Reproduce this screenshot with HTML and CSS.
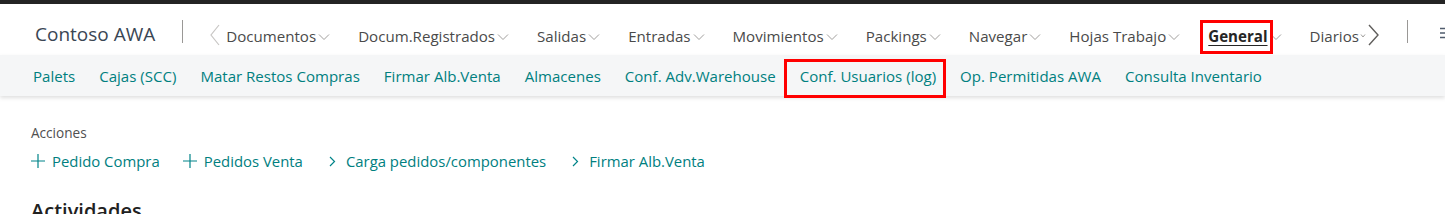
FILE: index.html
```html
<!DOCTYPE html>
<html lang="es">
<head>
<meta charset="utf-8">
<title>Contoso AWA</title>
<link rel="stylesheet" href="styles.css">
</head>
<body>
<div class="topbar"></div>
<header class="header">
  <div class="brand">Contoso AWA</div>
  <div class="vsep"></div>
  <svg class="scroll-left" width="10" height="22" viewBox="0 0 10 22"><path d="M9 1 L1 11 L9 21" fill="none" stroke="#c8c6c4" stroke-width="1.2"/></svg>
  <nav class="nav">
    <div class="nav-item">Documentos<svg class="caret" width="12" height="8" viewBox="0 0 12 8"><path d="M1 1.5 L6 6.5 L11 1.5" fill="none" stroke="#a19f9d" stroke-width="1"/></svg></div>
    <div class="nav-item">Docum.Registrados<svg class="caret" width="12" height="8" viewBox="0 0 12 8"><path d="M1 1.5 L6 6.5 L11 1.5" fill="none" stroke="#a19f9d" stroke-width="1"/></svg></div>
    <div class="nav-item">Salidas<svg class="caret" width="12" height="8" viewBox="0 0 12 8"><path d="M1 1.5 L6 6.5 L11 1.5" fill="none" stroke="#a19f9d" stroke-width="1"/></svg></div>
    <div class="nav-item">Entradas<svg class="caret" width="12" height="8" viewBox="0 0 12 8"><path d="M1 1.5 L6 6.5 L11 1.5" fill="none" stroke="#a19f9d" stroke-width="1"/></svg></div>
    <div class="nav-item">Movimientos<svg class="caret" width="12" height="8" viewBox="0 0 12 8"><path d="M1 1.5 L6 6.5 L11 1.5" fill="none" stroke="#a19f9d" stroke-width="1"/></svg></div>
    <div class="nav-item">Packings<svg class="caret" width="12" height="8" viewBox="0 0 12 8"><path d="M1 1.5 L6 6.5 L11 1.5" fill="none" stroke="#a19f9d" stroke-width="1"/></svg></div>
    <div class="nav-item">Navegar<svg class="caret" width="12" height="8" viewBox="0 0 12 8"><path d="M1 1.5 L6 6.5 L11 1.5" fill="none" stroke="#a19f9d" stroke-width="1"/></svg></div>
    <div class="nav-item">Hojas Trabajo<svg class="caret" width="12" height="8" viewBox="0 0 12 8"><path d="M1 1.5 L6 6.5 L11 1.5" fill="none" stroke="#a19f9d" stroke-width="1"/></svg></div>
    <div class="nav-item nav-active highlight"><span class="active-text">General</span><svg class="caret" width="12" height="8" viewBox="0 0 12 8"><path d="M1 1.5 L6 6.5 L11 1.5" fill="none" stroke="#a19f9d" stroke-width="1"/></svg></div>
    <div class="nav-item nav-last">Diarios<svg class="caret small" width="6" height="8" viewBox="0 0 6 8"><path d="M1 1.5 L3 4 L5 1.5" fill="none" stroke="#a19f9d" stroke-width="1"/></svg></div>
  </nav>
  <svg class="scroll-right" width="12" height="22" viewBox="0 0 12 22"><path d="M1 1 L10 11 L1 21" fill="none" stroke="#605e5c" stroke-width="1.4"/></svg>
  <div class="vsep vsep-right"></div>
  <svg class="menu" width="14" height="12" viewBox="0 0 14 12"><path d="M0 1.5 H14 M0 6 H14 M0 10.5 H14" stroke="#505c6d" stroke-width="1.3"/></svg>
</header>
<div class="subnav">
  <a class="sub-item">Palets</a>
  <a class="sub-item">Cajas (SCC)</a>
  <a class="sub-item">Matar Restos Compras</a>
  <a class="sub-item">Firmar Alb.Venta</a>
  <a class="sub-item">Almacenes</a>
  <a class="sub-item">Conf. Adv.Warehouse</a>
  <a class="sub-item highlight sub-highlight">Conf. Usuarios (log)</a>
  <a class="sub-item">Op. Permitidas AWA</a>
  <a class="sub-item">Consulta Inventario</a>
</div>
<main class="content">
  <div class="section-label">Acciones</div>
  <div class="actions">
    <a class="action"><svg class="plus" width="14" height="14" viewBox="0 0 14 14"><path d="M7 0 V14 M0 7 H14" stroke="#008489" stroke-width="1.2"/></svg>Pedido Compra</a>
    <a class="action"><svg class="plus" width="14" height="14" viewBox="0 0 14 14"><path d="M7 0 V14 M0 7 H14" stroke="#008489" stroke-width="1.2"/></svg>Pedidos Venta</a>
    <a class="action action-chev"><svg class="chev" width="7" height="11" viewBox="0 0 7 11"><path d="M1 1 L5.5 5.5 L1 10" fill="none" stroke="#008489" stroke-width="1.2"/></svg>Carga pedidos/componentes</a>
    <a class="action action-chev"><svg class="chev" width="7" height="11" viewBox="0 0 7 11"><path d="M1 1 L5.5 5.5 L1 10" fill="none" stroke="#008489" stroke-width="1.2"/></svg>Firmar Alb.Venta</a>
  </div>
  <h2 class="heading">Actividades</h2>
</main>
</body>
</html>
```

FILE: styles.css
```css
* { box-sizing: border-box; }
html, body { margin: 0; padding: 0; }
body {
  font-family: "Open Sans", "Noto Sans", sans-serif;
  background: #ffffff;
  width: 1445px;
  height: 214px;
  overflow: hidden;
}
.topbar { height: 4px; background: #242424; }

.header {
  height: 51px;
  padding-top: 13px;
  display: flex;
  align-items: center;
  white-space: nowrap;
  overflow: hidden;
}
.brand {
  padding-left: 35px;
  font-size: 19px;
  color: #3a4654;
  margin-top: -5px;
}
.vsep {
  width: 1px;
  height: 23px;
  background: #9a9896;
  margin-left: 27px;
  margin-top: -9px;
  flex: none;
}
.scroll-left { margin-left: 27px; margin-top: -2px; flex: none; }
.nav {
  display: flex;
  align-items: center;
  margin-left: 6px;
}
.nav-item {
  position: relative;
  display: flex;
  align-items: center;
  font-size: 15.1px;
  color: #4a4a4a;
  margin-right: 28px;
}
.caret { margin-left: 2px; margin-top: 2px; }
.caret.small { margin-left: 1px; }
.nav-last { margin-right: 2px; }
.active-text {
  font-weight: 700;
  color: #252525;
  text-decoration: underline;
  text-underline-offset: 3px;
}
.scroll-right { flex: none; margin-top: -3px; }
.vsep-right { margin-left: 27px; }
.menu { margin-left: 32px; flex: none; margin-top: -7px; }

.highlight { position: relative; }
.highlight::after {
  content: "";
  position: absolute;
  border: 3px solid #ff0000;
  pointer-events: none;
}
.nav-active::after { left: -8px; right: 9px; top: -6px; bottom: -8px; }

.subnav {
  height: 41px;
  background: #f5f6f7;
  display: flex;
  align-items: center;
  padding-left: 21px;
  box-shadow: 0 2px 4px rgba(0, 0, 0, 0.13);
  position: relative;
}
.sub-item {
  font-size: 15.05px;
  color: #00807f;
  padding: 0 12px;
  white-space: nowrap;
}
.sub-highlight::after { left: -4px; right: 2px; top: -7px; bottom: -12px; }

.content { padding: 29px 31px 0; }
.section-label {
  font-size: 13.6px;
  color: #505050;
  line-height: 16px;
}
.actions {
  display: flex;
  align-items: center;
  margin-top: 9px;
  height: 22px;
}
.action {
  display: flex;
  align-items: center;
  font-size: 14.9px;
  color: #00807f;
  margin-right: 23px;
  white-space: nowrap;
}
.plus { margin-right: 7px; }
.action-chev { margin-left: 3px; }
.chev { margin-right: 10px; }
.heading {
  margin: 26px 0 0;
  font-size: 20px;
  font-weight: 600;
  color: #212121;
  line-height: 26px;
}
```
